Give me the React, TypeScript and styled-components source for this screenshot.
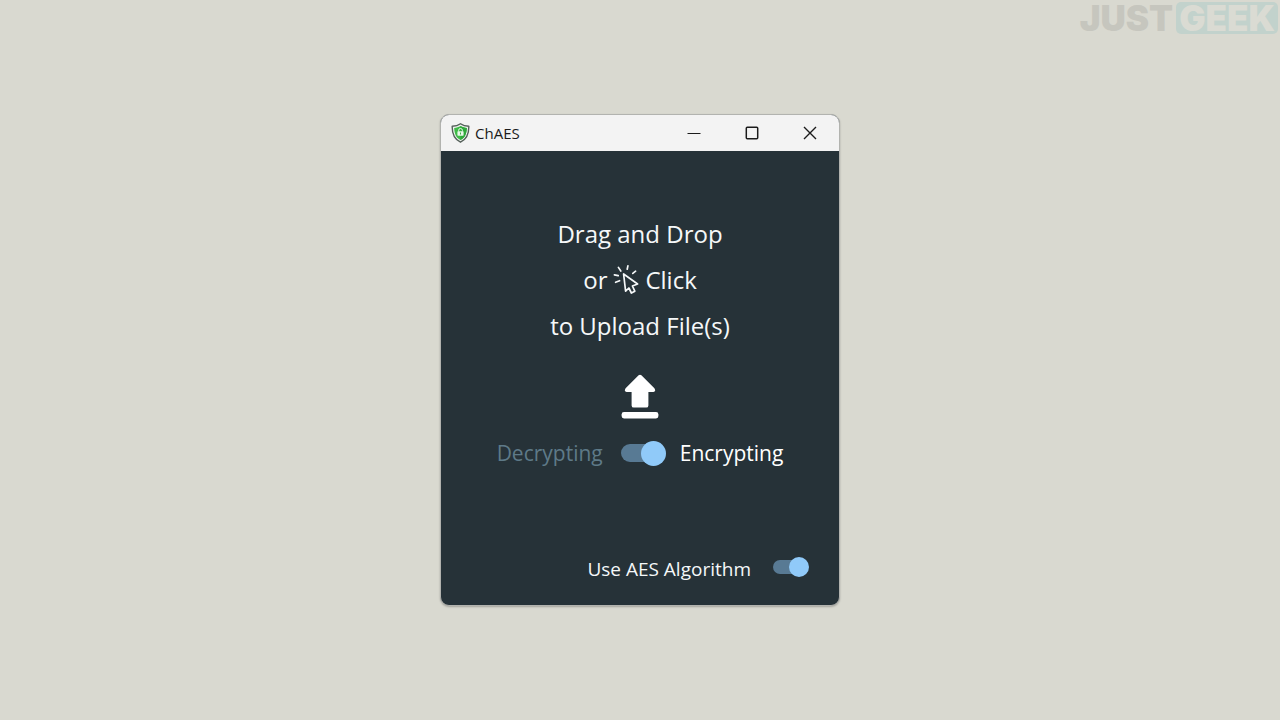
import React, { useState } from "react";
import styled, { createGlobalStyle } from "styled-components";

const GlobalStyle = createGlobalStyle`
  *, *::before, *::after { box-sizing: border-box; }
  body {
    margin: 0;
    background: #d9d9d0;
    font-family: "Open Sans", "Noto Sans", sans-serif;
  }
`;

const Page = styled.div`
  position: relative;
  display: flex;
  align-items: center;
  justify-content: center;
  min-height: 100vh;
`;

const Watermark = styled.div`
  position: absolute;
  top: 2px;
  right: 2px;
  display: flex;
  align-items: center;
  gap: 3px;
  font: 900 35px/32px Inter, sans-serif;
  color: #c6c6be;
`;

const WatermarkBox = styled.span`
  padding: 0 3px;
  border-radius: 5px;
  background: #c2d2cc;
  color: #dadbd3;
`;

const Window = styled.main`
  display: flex;
  flex-direction: column;
  width: min(400px, 100%);
  overflow: hidden;
  border: 1px solid #b2b3af;
  border-radius: 9px;
  background: #263238;
  box-shadow: 0 1px 2px rgba(0, 0, 0, 0.25);
`;

const TitleBar = styled.header`
  display: flex;
  align-items: center;
  height: 36px;
  padding-left: 10px;
  background: #f3f3f3;
  color: #1b1b1b;
`;

const Title = styled.h1`
  flex: 1;
  margin: 0 0 0 5px;
  font-size: 15px;
  line-height: 20px;
  font-weight: 400;
`;

const CaptionButton = styled.button`
  display: flex;
  align-items: center;
  justify-content: center;
  width: 58px;
  height: 36px;
  padding: 0;
  border: 0;
  background: transparent;
  color: inherit;
`;

const Body = styled.div`
  display: flex;
  flex-direction: column;
  align-items: center;
  padding: 60px 30px 24px;
  color: #f5f8f9;
`;

const DropZone = styled.button`
  display: flex;
  flex-direction: column;
  align-items: center;
  padding: 0;
  border: 0;
  background: transparent;
  color: inherit;
  font: inherit;
  font-size: 24px;
  line-height: 46px;
  cursor: pointer;
`;

const DropLine = styled.span`
  display: flex;
  align-items: center;
  gap: 6px;
  white-space: pre;
`;

const UploadIcon = styled.svg`
  margin-top: 25px;
`;

const ModeRow = styled.div`
  display: flex;
  align-items: center;
  gap: 14px;
  margin-top: 17px;
`;

const ModeLabel = styled.label<{ $active: boolean }>`
  color: ${(p) => (p.$active ? "#ffffff" : "#5e7a88")};
  font-size: 21px;
  line-height: 32px;
`;

const OptionRow = styled.div`
  display: flex;
  align-items: flex-start;
  align-self: flex-end;
  gap: 22px;
  margin-top: 88px;
`;

const OptionLabel = styled.label`
  font-size: 19px;
  line-height: 24px;
`;

const Switch = styled.input<{ $size: "large" | "small" }>`
  appearance: none;
  display: grid;
  align-items: center;
  flex: none;
  width: ${(p) => (p.$size === "large" ? 45 : 36)}px;
  height: ${(p) => (p.$size === "large" ? 25 : 20)}px;
  margin: ${(p) => (p.$size === "large" ? "0 0 0 4px" : "0")};
  cursor: pointer;

  &::before,
  &::after {
    content: "";
    grid-area: 1 / 1;
    border-radius: 13px;
  }
  &::before {
    width: ${(p) => (p.$size === "large" ? 40 : 32)}px;
    height: ${(p) => (p.$size === "large" ? 18 : 14)}px;
    background: #587a94;
  }
  &::after {
    justify-self: start;
    width: ${(p) => (p.$size === "large" ? 25 : 20)}px;
    height: ${(p) => (p.$size === "large" ? 25 : 20)}px;
    background: #e0e0e0;
  }
  &:checked::after {
    justify-self: end;
    background: #90caf9;
  }
`;

const ShieldLogo = () => (
  <svg width="19" height="20" viewBox="0 0 19 20" aria-hidden="true">
    <path
      d="M9.5 .8C7.3 2.4 4.4 3.2 1.2 3.2C1 10.6 3.2 16.4 9.5 19.2C15.8 16.4 18 10.6 17.8 3.2C14.6 3.2 11.7 2.4 9.5 .8Z"
      fill="#eef2ee"
      stroke="#55605a"
      strokeWidth="1.4"
      strokeLinejoin="round"
    />
    <path
      d="M9.5 3C7.6 4.2 5.6 4.8 3.2 4.9C3.3 10.4 4.9 14.6 9.5 17C14.1 14.6 15.7 10.4 15.8 4.9C13.4 4.8 11.4 4.2 9.5 3Z"
      fill="#3fbb47"
    />
    <path d="M9.5 3C11.4 4.2 13.4 4.8 15.8 4.9C15.7 10.4 14.1 14.6 9.5 17Z" fill="#2fa83b" />
    <path d="M7.6 8.5V7.4a1.9 1.9 0 0 1 3.8 0V8.5" fill="none" stroke="#e8f8e8" strokeWidth="1" />
    <rect x="6.4" y="8.2" width="6.2" height="4.6" rx=".7" fill="#e8f8e8" />
    <path d="M9.5 9.5V11.5" stroke="#3bb143" strokeWidth="1" />
  </svg>
);

const ClickIcon = () => (
  <svg
    width="26"
    height="32"
    viewBox="0 0 26 32"
    fill="none"
    stroke="currentColor"
    strokeWidth="1.7"
    strokeLinecap="round"
    strokeLinejoin="round"
    aria-hidden="true"
  >
    <path d="M10.6 10L12.6 27.2L15.9 24L18.4 29L21.8 27.2L19.4 22L24.6 20Z" />
    <path d="M5.4 3.4L7.8 7M14.9 1.9L14.2 5.2M22.6 7.2L19.8 9.4M1.4 10.8L5.2 11.7M2.6 18.3L6.6 16.7" />
  </svg>
);

export default function App() {
  const [encrypting, setEncrypting] = useState(true);
  const [useAes, setUseAes] = useState(true);

  return (
    <Page>
      <GlobalStyle />
      <Watermark>
        <span>JUST</span>
        <WatermarkBox>GEEK</WatermarkBox>
      </Watermark>
      <Window>
        <TitleBar>
          <ShieldLogo />
          <Title>ChAES</Title>
          <CaptionButton type="button" aria-label="Minimize">
            <svg width="14" height="14" viewBox="0 0 14 14" fill="none" stroke="currentColor" strokeWidth="1.1">
              <path d="M.5 7.5H13.5" />
            </svg>
          </CaptionButton>
          <CaptionButton type="button" aria-label="Maximize">
            <svg width="14" height="14" viewBox="0 0 14 14" fill="none" stroke="currentColor" strokeWidth="1.5">
              <rect x="1.3" y="1.3" width="11.4" height="11.4" rx="1" />
            </svg>
          </CaptionButton>
          <CaptionButton type="button" aria-label="Close">
            <svg width="14" height="14" viewBox="0 0 14 14" fill="none" stroke="currentColor" strokeWidth="1.4">
              <path d="M1 1L13 13M13 1L1 13" />
            </svg>
          </CaptionButton>
        </TitleBar>
        <Body>
          <DropZone type="button">
            <DropLine>Drag and Drop</DropLine>
            <DropLine>
              or
              <ClickIcon />
              Click
            </DropLine>
            <DropLine>to Upload File(s)</DropLine>
            <UploadIcon width="38" height="46" viewBox="0 0 38 46" fill="#ffffff" aria-hidden="true">
              <path d="M17.6 1.3Q19 0 20.4 1.3L33.4 14.3Q35.4 17.6 32.4 18H27.4V31.4Q27.4 33.6 25.2 33.6H12.8Q10.6 33.6 10.6 31.4V18H5.6Q2.6 17.6 4.6 14.3Z" />
              <rect x=".6" y="38" width="36.8" height="6.4" rx="2.4" />
            </UploadIcon>
          </DropZone>
          <ModeRow>
            <ModeLabel htmlFor="mode" $active={!encrypting}>
              Decrypting
            </ModeLabel>
            <Switch
              id="mode"
              type="checkbox"
              role="switch"
              $size="large"
              checked={encrypting}
              onChange={(e) => setEncrypting(e.target.checked)}
            />
            <ModeLabel htmlFor="mode" $active={encrypting}>
              Encrypting
            </ModeLabel>
          </ModeRow>
          <OptionRow>
            <OptionLabel htmlFor="aes">Use AES Algorithm</OptionLabel>
            <Switch
              id="aes"
              type="checkbox"
              role="switch"
              $size="small"
              checked={useAes}
              onChange={(e) => setUseAes(e.target.checked)}
            />
          </OptionRow>
        </Body>
      </Window>
    </Page>
  );
}
